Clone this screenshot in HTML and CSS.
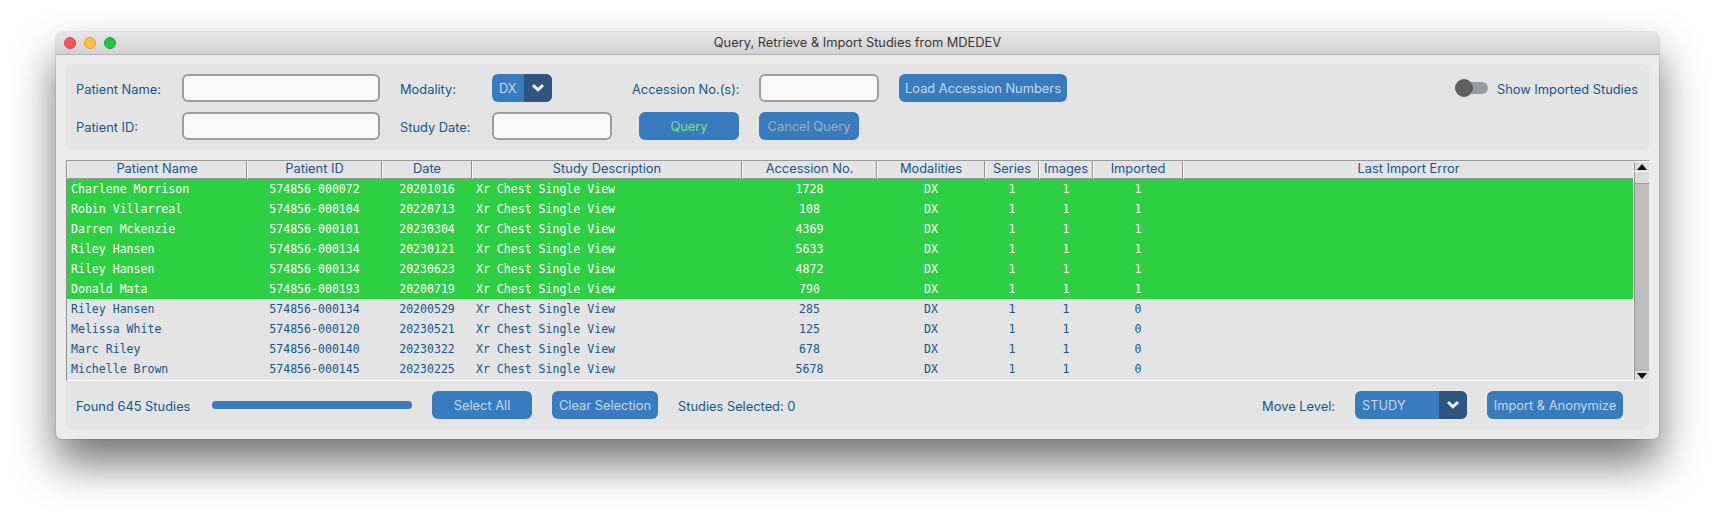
FILE: index.html
```html
<!DOCTYPE html>
<html lang="en">
<head>
<meta charset="utf-8">
<title>Query, Retrieve &amp; Import Studies from MDEDEV</title>
<link rel="stylesheet" href="styles.css">
</head>
<body>
<div class="window">
  <header class="titlebar">
    <div class="lights"><span class="light red"></span><span class="light yellow"></span><span class="light green"></span></div>
    <div class="title">Query, Retrieve &amp; Import Studies from MDEDEV</div>
    <div></div>
  </header>
  <div class="content">
    <section class="query-panel">
      <span class="label">Patient Name:</span>
      <div class="input"></div>
      <span class="label">Modality:</span>
      <div class="combo combo-dx"><span class="combo-value">DX</span><span class="combo-arrow"><svg width="14" height="10" viewBox="0 0 14 10"><path d="M2 2.2 L7 6.8 L12 2.2" fill="none" stroke="#e9eef4" stroke-width="3"/></svg></span></div>
      <span class="label">Accession No.(s):</span>
      <div class="input"></div>
      <button class="btn btn-load">Load Accession Numbers</button>
      <div class="switch-wrap"><span class="switch"><span class="knob"></span></span><span class="label">Show Imported Studies</span></div>
      <span class="label">Patient ID:</span>
      <div class="input"></div>
      <span class="label">Study Date:</span>
      <div class="input"></div>
      <button class="btn btn-query">Query</button>
      <button class="btn btn-cancel">Cancel Query</button>
    </section>
    <section class="table-frame">
      <table class="studies">
        <colgroup>
          <col class="c180"><col class="c135"><col class="c90"><col class="c270"><col class="c135"><col class="c108"><col class="c54"><col class="c54"><col class="c90"><col class="c450">
        </colgroup>
        <thead>
          <tr><th>Patient Name</th><th>Patient ID</th><th>Date</th><th>Study Description</th><th>Accession No.</th><th>Modalities</th><th>Series</th><th>Images</th><th>Imported</th><th>Last Import Error</th></tr>
        </thead>
        <tbody>
          <tr class="done"><td class="left">Charlene Morrison</td><td>574856-000072</td><td>20201016</td><td class="left">Xr Chest Single View</td><td>1728</td><td>DX</td><td>1</td><td>1</td><td>1</td><td></td></tr>
          <tr class="done"><td class="left">Robin Villarreal</td><td>574856-000104</td><td>20220713</td><td class="left">Xr Chest Single View</td><td>108</td><td>DX</td><td>1</td><td>1</td><td>1</td><td></td></tr>
          <tr class="done"><td class="left">Darren Mckenzie</td><td>574856-000101</td><td>20230304</td><td class="left">Xr Chest Single View</td><td>4369</td><td>DX</td><td>1</td><td>1</td><td>1</td><td></td></tr>
          <tr class="done"><td class="left">Riley Hansen</td><td>574856-000134</td><td>20230121</td><td class="left">Xr Chest Single View</td><td>5633</td><td>DX</td><td>1</td><td>1</td><td>1</td><td></td></tr>
          <tr class="done"><td class="left">Riley Hansen</td><td>574856-000134</td><td>20230623</td><td class="left">Xr Chest Single View</td><td>4872</td><td>DX</td><td>1</td><td>1</td><td>1</td><td></td></tr>
          <tr class="done"><td class="left">Donald Mata</td><td>574856-000193</td><td>20200719</td><td class="left">Xr Chest Single View</td><td>790</td><td>DX</td><td>1</td><td>1</td><td>1</td><td></td></tr>
          <tr><td class="left">Riley Hansen</td><td>574856-000134</td><td>20200529</td><td class="left">Xr Chest Single View</td><td>285</td><td>DX</td><td>1</td><td>1</td><td>0</td><td></td></tr>
          <tr><td class="left">Melissa White</td><td>574856-000120</td><td>20230521</td><td class="left">Xr Chest Single View</td><td>125</td><td>DX</td><td>1</td><td>1</td><td>0</td><td></td></tr>
          <tr><td class="left">Marc Riley</td><td>574856-000140</td><td>20230322</td><td class="left">Xr Chest Single View</td><td>678</td><td>DX</td><td>1</td><td>1</td><td>0</td><td></td></tr>
          <tr><td class="left">Michelle Brown</td><td>574856-000145</td><td>20230225</td><td class="left">Xr Chest Single View</td><td>5678</td><td>DX</td><td>1</td><td>1</td><td>0</td><td></td></tr>
        </tbody>
      </table>
      <div class="scrollbar">
        <div class="sb-btn"><svg width="10" height="6" viewBox="0 0 10 6"><path d="M5 0 L10 6 L0 6 Z" fill="#111"/></svg></div>
        <div class="sb-thumb"></div>
        <div class="sb-trough"></div>
        <div class="sb-btn"><svg width="10" height="6" viewBox="0 0 10 6"><path d="M0 0 L10 0 L5 6 Z" fill="#111"/></svg></div>
      </div>
    </section>
    <section class="action-bar">
      <span class="label found">Found 645 Studies</span>
      <div class="progress"></div>
      <button class="btn btn-select">Select All</button>
      <button class="btn btn-clear">Clear Selection</button>
      <span class="label">Studies Selected: 0</span>
      <span class="label move-label">Move Level:</span>
      <div class="combo combo-level"><span class="combo-value">STUDY</span><span class="combo-arrow"><svg width="14" height="10" viewBox="0 0 14 10"><path d="M2 2.2 L7 6.8 L12 2.2" fill="none" stroke="#e9eef4" stroke-width="3"/></svg></span></div>
      <button class="btn btn-import">Import &amp; Anonymize</button>
    </section>
  </div>
</div>
</body>
</html>
```
FILE: styles.css
```css
* { box-sizing: border-box; }
html, body { margin: 0; background: #fff; }
body {
  padding: 32px 56px 0 56px;
  height: 518px;
  overflow: hidden;
  font-family: Inter, "Liberation Sans", sans-serif;
  font-size: 12.85px;
  color: #14568f;
}
.window {
  width: 1603px;
  height: 407px;
  background: #ebebeb;
  border-radius: 6px;
  box-shadow: 0 0 0 1px rgba(0,0,0,.08), 0 24px 44px rgba(0,0,0,.55);
}
.titlebar {
  height: 23px;
  display: grid;
  grid-template-columns: 1fr auto 1fr;
  align-items: center;
  background: linear-gradient(#e8e7e8, #d2d0d2);
  border-bottom: 1px solid #b1b1b1;
  border-radius: 6px 6px 0 0;
  padding: 0 8px 1px;
}
.lights { display: flex; gap: 8px; }
.light { width: 12px; height: 12px; border-radius: 50%; }
.red { background: #fc5753; border: 1px solid #e0443e; }
.yellow { background: #fdbc40; border: 1px solid #dea123; }
.green { background: #1fc541; border: 1px solid #1aab29; }
.title { color: #3a3636; font-size: 12.85px; }
.content { padding: 9px 10px 0 10px; }
.query-panel {
  height: 86px;
  padding: 10px 11px 10px 10px;
  background: #e4e4e4;
  border-radius: 6px;
  display: grid;
  grid-template-columns: 86px 198px 72px 120px 107px 120px 168px 1fr;
  grid-template-rows: 28px 28px;
  column-gap: 20px;
  row-gap: 10px;
  align-items: center;
}
.label { padding-top: 2px; white-space: nowrap; }
.input {
  height: 28px;
  background: #f9f9f9;
  border: 2px solid #9a9ea3;
  border-radius: 6px;
}
.btn {
  height: 28px;
  padding: 0;
  border: 0;
  border-radius: 6px;
  background: #387bbf;
  color: #c8d8ea;
  font: inherit;
}
.btn-query { width: 100px; justify-self: end; color: #7fe07f; }
.btn-cancel { width: 100px; color: #a3aeb9; }
.btn-select { width: 100px; }
.btn-clear { width: 106px; }
.btn-import { width: 136px; }
.combo {
  height: 28px;
  display: flex;
  border-radius: 6px;
  overflow: hidden;
  background: #387bbf;
  color: #c8d8ea;
}
.combo-dx { width: 60px; }
.combo-level { width: 112px; }
.combo-value { flex: 1; padding: 2px 0 0 7px; line-height: 26px; }
.combo-arrow {
  width: 28px;
  background: #30557f;
  display: flex;
  align-items: center;
  justify-content: center;
}
.switch-wrap { display: flex; align-items: center; justify-content: flex-end; gap: 9px; }
.switch {
  position: relative;
  width: 33px;
  height: 12px;
  border-radius: 6px;
  background: #969da4;
}
.knob {
  position: absolute;
  left: 0;
  top: -3px;
  width: 18px;
  height: 18px;
  border-radius: 50%;
  background: #5e5e5e;
}
.table-frame {
  margin-top: 10px;
  height: 221px;
  display: flex;
  border-top: 1px solid #9a9a9a;
  border-left: 1px solid #8f8f8f;
  border-bottom: 1px solid #fafafa;
}
.studies {
  width: 1566px;
  table-layout: fixed;
  border-collapse: separate;
  border-spacing: 0;
  background: #e4e4e4;
  flex: none;
  align-self: flex-start;
}
.c180 { width: 180px; }
.c135 { width: 135px; }
.c90 { width: 90px; }
.c270 { width: 270px; }
.c108 { width: 108px; }
.c54 { width: 54px; }
.c450 { width: 450px; }
.studies th {
  height: 18px;
  padding: 0 0 1px;
  font-weight: 400;
  font-size: 12.85px;
  line-height: 16px;
  color: #14568f;
  border-bottom: 1px solid #9a9a9a;
  border-right: 1px solid #8f8f8f;
  border-left: 1px solid #fafafa;
}
.studies th:last-child { border-right: 0; }
.studies td {
  height: 20px;
  padding: 0;
  font-family: "DejaVu Sans Mono", "Liberation Mono", monospace;
  font-size: 11.55px;
  line-height: 20px;
  text-align: center;
  white-space: nowrap;
  color: #14568f;
}
.studies td.left { text-align: left; padding-left: 4px; }
.studies .done td { background: #2cd042; color: #fff; }
.scrollbar {
  width: 16px;
  display: flex;
  flex-direction: column;
  border-left: 1px solid #fafafa;
  padding-top: 1px;
  background: #fafafa;
}
.scrollbar > * { border-left: 1px solid #8f8f8f; }
.sb-btn {
  height: 9px;
  flex: none;
  background: #dcdcdc;
  display: flex;
  align-items: center;
  justify-content: center;
}
.sb-thumb { height: 12px; margin-top: 1px; flex: none; background: #dcdcdc; border-bottom: 1px solid #9a9a9a; }
.sb-trough { flex: 1; background: #bdbdbd; }
.action-bar {
  height: 48px;
  padding: 10px 26px 10px 10px;
  background: #e4e4e4;
  border-radius: 0 0 6px 6px;
  display: flex;
  align-items: center;
  gap: 20px;
}
.found { width: 116px; }
.progress { width: 200px; height: 8px; border-radius: 4px; background: #387bbf; }
.move-label { margin-left: auto; }
```
